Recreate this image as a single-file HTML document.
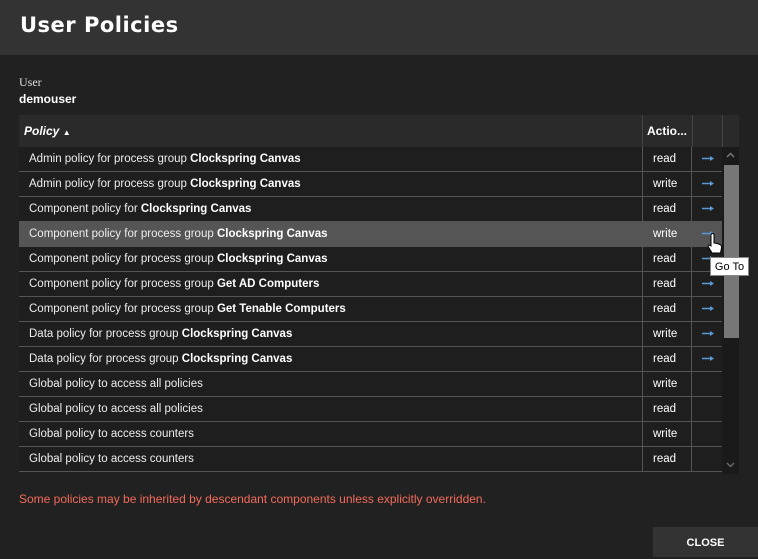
<!DOCTYPE html>
<html><head><style>
body{margin:0;width:758px;height:557px;background:#212121;font-family:"Liberation Sans",sans-serif;color:#fff;position:relative;overflow:hidden}
.hdr{position:absolute;left:0;top:0;width:758px;height:55px;background:#333}
.hdr h1{margin:0;position:absolute;left:20px;top:13px;font-size:21px;font-weight:bold;letter-spacing:0.5px;font-family:"DejaVu Sans",sans-serif}
.lbl{position:absolute;left:19px;top:75px;font-size:12px;font-family:"Liberation Serif",serif;color:#ddd}
.usr{position:absolute;left:19px;top:92px;font-size:12px;font-weight:bold}
.th{position:absolute;top:115px;height:32px;background:#2a2a2a;font-size:12px;font-weight:bold;line-height:32px;box-sizing:border-box}
.row{position:absolute;left:19px;width:703px;height:24px;border-bottom:1px solid #555;font-size:11.5px;line-height:24px;background:#1e1e1e}
.row.h{background:#555}
.row b{font-weight:bold;color:#fff}
.p{position:absolute;left:10px;color:#eee}
.a{position:absolute;left:623px;width:50px;height:25px;border-left:1px solid #555;border-right:1px solid #555;padding-left:10px;box-sizing:border-box}
.ar{position:absolute;left:683px;top:8px}
.sb{position:absolute;left:722px;top:147px;width:17px;height:327px;background:#1a1a1a}
.th2{position:absolute;left:724px;top:165px;width:15px;height:173px;background:#777}
.note{position:absolute;left:19px;top:492px;font-size:12px;color:#f26b5b}
.close{position:absolute;left:653px;top:527px;width:105px;height:30px;background:#333;font-size:11px;font-weight:bold;text-align:center;line-height:32px}
.tip{position:absolute;left:710px;top:257px;width:39px;height:19px;background:#fff;color:#000;font-size:11px;line-height:19px;text-align:center;border:1px solid #888;box-sizing:border-box}
</style></head><body>
<div class="hdr"><h1>User Policies</h1></div>
<div class="lbl">User</div>
<div class="usr">demouser</div>
<div class="th" style="left:19px;width:623px"><i style="padding-left:5px">Policy</i> <span style="font-size:8px">▲</span></div>
<div class="th" style="left:642px;width:50px;padding-left:4px;border-left:1px solid #444">Actio...</div>
<div class="th" style="left:692px;width:30px;border-left:1px solid #444"></div>
<div class="th" style="left:722px;width:17px;border-left:1px solid #444"></div>
<svg width="0" height="0" style="position:absolute"><defs><g id="arw"><path d="M0 3.5H10" stroke="#5b9bd5" stroke-width="1.5"/><path d="M8 1L12 3.5L8 6Z" fill="#5b9bd5"/></g></defs></svg>
<div class="row" style="top:147px"><span class="p">Admin policy for process group <b>Clockspring Canvas</b></span><span class="a">read</span><svg class="ar" width="13" height="7"><use href="#arw"/></svg></div>
<div class="row" style="top:172px"><span class="p">Admin policy for process group <b>Clockspring Canvas</b></span><span class="a">write</span><svg class="ar" width="13" height="7"><use href="#arw"/></svg></div>
<div class="row" style="top:197px"><span class="p">Component policy for <b>Clockspring Canvas</b></span><span class="a">read</span><svg class="ar" width="13" height="7"><use href="#arw"/></svg></div>
<div class="row h" style="top:222px"><span class="p">Component policy for process group <b>Clockspring Canvas</b></span><span class="a">write</span><svg class="ar" width="13" height="7"><use href="#arw"/></svg></div>
<div class="row" style="top:247px"><span class="p">Component policy for process group <b>Clockspring Canvas</b></span><span class="a">read</span><svg class="ar" width="13" height="7"><use href="#arw"/></svg></div>
<div class="row" style="top:272px"><span class="p">Component policy for process group <b>Get AD Computers</b></span><span class="a">read</span><svg class="ar" width="13" height="7"><use href="#arw"/></svg></div>
<div class="row" style="top:297px"><span class="p">Component policy for process group <b>Get Tenable Computers</b></span><span class="a">read</span><svg class="ar" width="13" height="7"><use href="#arw"/></svg></div>
<div class="row" style="top:322px"><span class="p">Data policy for process group <b>Clockspring Canvas</b></span><span class="a">write</span><svg class="ar" width="13" height="7"><use href="#arw"/></svg></div>
<div class="row" style="top:347px"><span class="p">Data policy for process group <b>Clockspring Canvas</b></span><span class="a">read</span><svg class="ar" width="13" height="7"><use href="#arw"/></svg></div>
<div class="row" style="top:372px"><span class="p">Global policy to access all policies</span><span class="a">write</span></div>
<div class="row" style="top:397px"><span class="p">Global policy to access all policies</span><span class="a">read</span></div>
<div class="row" style="top:422px"><span class="p">Global policy to access counters</span><span class="a">write</span></div>
<div class="row" style="top:447px"><span class="p">Global policy to access counters</span><span class="a">read</span></div>
<div class="sb"></div><div class="th2"></div>
<svg style="position:absolute;left:726px;top:152px" width="9" height="6"><path d="M1 5L4.5 1.5L8 5" stroke="#777" stroke-width="1.5" fill="none"/></svg>
<svg style="position:absolute;left:726px;top:462px" width="9" height="6"><path d="M1 1L4.5 4.5L8 1" stroke="#666" stroke-width="1.5" fill="none"/></svg>
<svg style="position:absolute;left:706px;top:233px" width="18" height="24"><path d="M5 2Q5 0.5 6.5 0.5Q8 0.5 8 2V10L11 10.5L14 11.5Q16 12.5 15.5 15L14.5 20H6L2.5 14Q1.5 12.5 3 12L5 13Z" fill="#fff" stroke="#000" stroke-width="1"/></svg>
<div class="tip">Go To</div>
<div class="note">Some policies may be inherited by descendant components unless explicitly overridden.</div>
<div class="close">CLOSE</div>
</body></html>
